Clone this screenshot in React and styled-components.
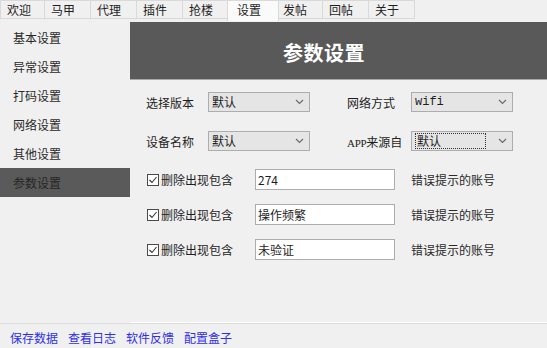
import React from 'react'
import styled, { createGlobalStyle } from 'styled-components'

const Global = createGlobalStyle`
  html, body {
    margin: 0;
    padding: 0;
    background: #f0f0f0;
  }
  body {
    font-family: "Noto Sans CJK SC", "Liberation Sans", sans-serif;
    font-size: 12px;
    color: #1e1e1e;
  }
`

const Window = styled.div`
  width: 547px;
  height: 348px;
  display: flex;
  flex-direction: column;
  overflow: hidden;
`

const TabBar = styled.div`
  display: flex;
  height: 19px;
  align-items: flex-start;
`

const Tab = styled.div`
  box-sizing: border-box;
  width: ${p => (p.$active ? '52px' : '47px')};
  height: ${p => (p.$active ? '21px' : '19px')};
  margin-left: ${p => (p.$active ? '-2px' : '-1px')};
  margin-right: ${p => (p.$active ? '-2px' : '0')};
  padding-left: ${p => (p.$active ? '9px' : '6px')};
  line-height: 18px;
  background: ${p => (p.$active ? '#fafafa' : '#f0f0f0')};
  border: 1px solid #d9d9d9;
  border-bottom: ${p => (p.$active ? 'none' : '1px solid #d9d9d9')};
  position: relative;
  z-index: ${p => (p.$active ? 2 : 1)};
  &:first-child {
    margin-left: 0;
    width: 45px;
  }
`

const Body = styled.div`
  display: flex;
  height: 304px;
`

const Sidebar = styled.nav`
  width: 130px;
  padding-top: 4px;
  display: flex;
  flex-direction: column;
`

const SideItem = styled.div`
  height: 29px;
  line-height: 29px;
  padding-left: 13px;
  color: ${p => (p.$active ? '#262626' : '#2a2a2a')};
  background: ${p => (p.$active ? '#5a5a5a' : 'transparent')};
`

const Main = styled.main`
  flex: 1;
  display: flex;
  flex-direction: column;
  border-bottom: 1px solid #ffffff;
`

const Header = styled.header`
  margin-top: 3px;
  height: 58px;
  background: #595959;
  border-bottom: 1px solid #a8a8a8;
  box-sizing: border-box;
  display: flex;
  align-items: center;
  padding: 3px 0 0 153px;
  color: #ffffff;
  font-size: 20px;
  font-weight: 700;
  letter-spacing: 0.5px;
`

const SelectGrid = styled.div`
  display: grid;
  grid-template-columns: 62px 102px 37px 64px 102px;
  grid-auto-rows: 20px;
  row-gap: 19px;
  align-items: center;
  padding: 12px 0 0 16px;
`

const Label = styled.span`
  white-space: nowrap;
`

const Latin = styled.span`
  font-family: "Liberation Serif", serif;
  font-size: 11px;
  letter-spacing: -0.3px;
`

const Spacer = styled.span``

const SelectBox = styled.div`
  box-sizing: border-box;
  height: 20px;
  display: flex;
  align-items: center;
  background: #e5e5e5;
  border: 1px solid #adadad;
  padding: 0 5px 0 3px;
`

const SelectText = styled.span`
  flex: 1;
  font-family: ${p => (p.$mono ? '"Liberation Mono", monospace' : 'inherit')};
  line-height: 14px;
`

const Focus = styled.span`
  border: 1px dotted #333;
  padding: 0 1px;
  margin-right: 12px;
  flex: 1;
  line-height: 14px;
`

const Chevron = () => (
  <svg width="9" height="6" viewBox="0 0 9 6">
    <path d="M1 1 L4.5 4.5 L8 1" fill="none" stroke="#6b6b6b" strokeWidth="1.2" />
  </svg>
)

const Select = ({ value, mono, focused }) => (
  <SelectBox>
    {focused ? <Focus>{value}</Focus> : <SelectText $mono={mono}>{value}</SelectText>}
    <Chevron />
  </SelectBox>
)

const CheckList = styled.div`
  display: flex;
  flex-direction: column;
  gap: 15px;
  padding: 18px 0 0 17px;
`

const CheckRow = styled.div`
  display: grid;
  grid-template-columns: 13px 95px 140px auto;
  align-items: center;
  height: 20px;
`

const Box = styled.span`
  box-sizing: border-box;
  width: 12px;
  height: 12px;
  border: 1px solid #4a4a4a;
  background: #fff;
  display: flex;
  align-items: center;
  justify-content: center;
`

const CheckText = styled.span`
  padding-left: 1px;
`

const TextInput = styled.div`
  box-sizing: border-box;
  height: 21px;
  background: #ffffff;
  border: 1px solid #adadad;
  padding-left: 2px;
  line-height: 19px;
`

const Hint = styled.span`
  padding-left: 16px;
  color: #2a2a2a;
`

const Footer = styled.footer`
  flex: 1;
  border-top: 1px solid #dcdcdc;
  display: flex;
  align-items: center;
  gap: 10px;
  padding: 2px 0 0 10px;
`

const Link = styled.a`
  color: #2f2fe6;
  text-decoration: none;
  cursor: pointer;
`

const tabs = ['欢迎', '马甲', '代理', '插件', '抢楼', '设置', '发帖', '回帖', '关于']
const menu = ['基本设置', '异常设置', '打码设置', '网络设置', '其他设置', '参数设置']
const filters = ['274', '操作频繁', '未验证']
const links = ['保存数据', '查看日志', '软件反馈', '配置盒子']

const Check = () => (
  <Box>
    <svg width="10" height="10" viewBox="0 0 10 10">
      <path d="M1.5 5 L4 7.5 L8.5 2" fill="none" stroke="#333" strokeWidth="1.1" />
    </svg>
  </Box>
)

export default function App() {
  return (
    <Window>
      <Global />
      <TabBar>
        {tabs.map(t => (
          <Tab key={t} $active={t === '设置'}>{t}</Tab>
        ))}
      </TabBar>
      <Body>
        <Sidebar>
          {menu.map(m => (
            <SideItem key={m} $active={m === '参数设置'}>{m}</SideItem>
          ))}
        </Sidebar>
        <Main>
          <Header>参数设置</Header>
          <SelectGrid>
            <Label>选择版本</Label>
            <Select value='默认' />
            <Spacer />
            <Label>网络方式</Label>
            <Select value='wifi' mono />
            <Label>设备名称</Label>
            <Select value='默认' />
            <Spacer />
            <Label><Latin>APP</Latin>来源自</Label>
            <Select value='默认' focused />
          </SelectGrid>
          <CheckList>
            {filters.map(f => (
              <CheckRow key={f}>
                <Check />
                <CheckText>删除出现包含</CheckText>
                <TextInput>{f}</TextInput>
                <Hint>错误提示的账号</Hint>
              </CheckRow>
            ))}
          </CheckList>
        </Main>
      </Body>
      <Footer>
        {links.map(l => (
          <Link key={l}>{l}</Link>
        ))}
      </Footer>
    </Window>
  )
}
